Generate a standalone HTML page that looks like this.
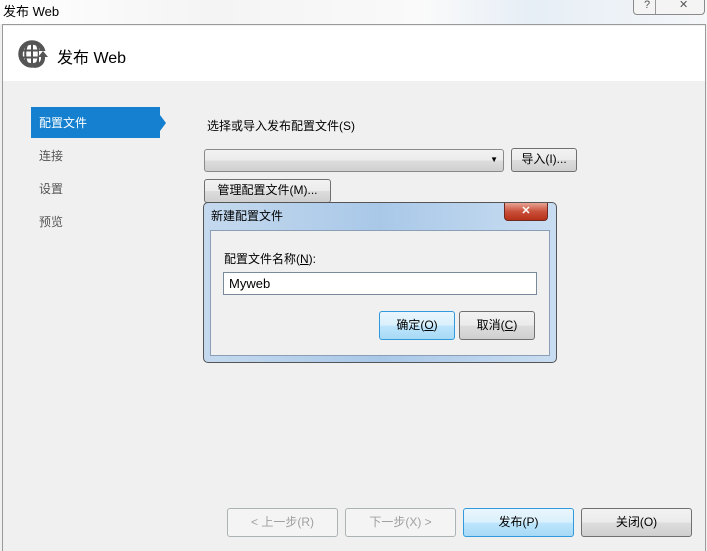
<!DOCTYPE html><html><head><meta charset="utf-8"><style>
*{box-sizing:border-box;margin:0;padding:0}
body{width:707px;height:551px;overflow:hidden;background:#f0f0f0;font-family:"Liberation Sans","Noto Sans CJK SC",sans-serif;font-size:12px;color:#000;position:relative}
.a{position:absolute}
.btn{position:absolute;border:1px solid #707070;border-radius:3px;background:linear-gradient(#f2f2f2 0%,#ebebeb 50%,#dddddd 51%,#cfcfcf 100%);text-align:center;font-size:12px}
.dis{border-color:#adb2b5;background:#f4f4f4;color:#a0a0a0}
.blue{border-color:#3c7fb1;background:linear-gradient(#eaf6fd 0%,#d9f0fc 50%,#bee6fd 51%,#a7d9f5 100%)}
</style></head><body>
<div class="a" style="left:0;top:0;width:707px;height:24px;background:linear-gradient(90deg,#ffffff 0%,#f4f4f4 30%,#fafafa 60%,#e6eef6 75%,#f4f6f8 100%)"></div>
<div class="a" style="left:3px;top:1px;font-size:13px">发布 Web</div>
<div class="a" style="left:633px;top:0;width:72px;height:15px;border:1px solid #8a8a8a;border-top:none;border-radius:0 0 4px 4px;background:#f4f4f4;font-size:11px;color:#555"><span class="a" style="left:10px;top:-1px">?</span><span class="a" style="left:21px;top:0;width:1px;height:14px;background:#999"></span><span class="a" style="left:45px;top:-2px">✕</span></div>
<div class="a" style="left:2px;top:24px;width:704px;height:527px;border:1px solid #9a9a9a;border-bottom:none;background:#f0f0f0"></div>
<div class="a" style="left:3px;top:26px;width:702px;height:55px;background:#fff"></div>
<svg class="a" style="left:18px;top:40px" width="32" height="28" viewBox="0 0 32 28"><circle cx="14" cy="14" r="11.5" fill="none" stroke="#555" stroke-width="4.5"/><path d="M4 10.5h20M4 17.5h20M14 3v22M9.5 4c-3 6-3 14 0 20M18.5 4c3 6 3 14 0 20" stroke="#555" stroke-width="2" fill="none"/><rect x="21" y="11" width="11" height="14" fill="#fff"/><path d="M20 17l5-6 5 6z" fill="#555"/><path d="M25 16v2c0 5-4 8-9 8" stroke="#555" stroke-width="4" fill="none"/></svg>
<div class="a" style="left:57px;top:44px;font-size:16px">发布 Web</div>
<div class="a" style="left:31px;top:107px;width:129px;height:31px;background:#1480cf"></div>
<div class="a" style="left:160px;top:115px;width:0;height:0;border-top:8px solid transparent;border-bottom:8px solid transparent;border-left:6px solid #1480cf"></div>
<div class="a" style="left:39px;top:114px;color:#fff;font-size:12px">配置文件</div>
<div class="a" style="left:39px;top:147px;color:#555">连接</div>
<div class="a" style="left:39px;top:180px;color:#555">设置</div>
<div class="a" style="left:39px;top:213px;color:#555">预览</div>
<div class="a" style="left:207px;top:117px">选择或导入发布配置文件(S)</div>
<div class="btn" style="left:204px;top:149px;width:300px;height:23px;border-color:#8a8a8a"><span class="a" style="right:5px;top:5px;font-size:8px">▼</span></div>
<div class="btn" style="left:511px;top:148px;width:66px;height:24px;line-height:21px">导入(I)...</div>
<div class="btn" style="left:204px;top:179px;width:127px;height:24px;line-height:21px">管理配置文件(M)...</div>
<div class="a" style="left:203px;top:202px;width:354px;height:161px;border:1px solid #555;border-radius:5px;background:linear-gradient(90deg,#c4d9ee,#a9c8e8 50%,#c9ddf1);"></div>
<div class="a" style="left:211px;top:207px;font-size:12px">新建配置文件</div>
<div class="a" style="left:504px;top:203px;width:44px;height:18px;border:1px solid #6d2a22;border-top:none;border-radius:0 0 4px 4px;background:linear-gradient(#e8a493,#c9503a 50%,#b73018);color:#fff;text-align:center;font-size:11px;font-weight:bold;line-height:16px">✕</div>
<div class="a" style="left:210px;top:230px;width:340px;height:126px;border:1px solid #8a9fb5;background:#f0f0f0"></div>
<div class="a" style="left:224px;top:250px">配置文件名称(<u>N</u>):</div>
<div class="a" style="left:223px;top:272px;width:314px;height:23px;border:1px solid #7a8a9a;background:#fff;padding:3px 5px;font-size:13px">Myweb</div>
<div class="btn blue" style="left:379px;top:311px;width:76px;height:29px;line-height:26px;border-color:#3399dd">确定(<u>O</u>)</div>
<div class="btn" style="left:459px;top:311px;width:76px;height:29px;line-height:26px">取消(<u>C</u>)</div>
<div class="btn dis" style="left:227px;top:508px;width:111px;height:29px;line-height:26px">&lt; 上一步(R)</div>
<div class="btn dis" style="left:345px;top:508px;width:111px;height:29px;line-height:26px">下一步(X) &gt;</div>
<div class="btn blue" style="left:463px;top:508px;width:111px;height:29px;line-height:26px;border-color:#3399dd">发布(P)</div>
<div class="btn" style="left:581px;top:508px;width:111px;height:29px;line-height:26px">关闭(O)</div>
</body></html>
